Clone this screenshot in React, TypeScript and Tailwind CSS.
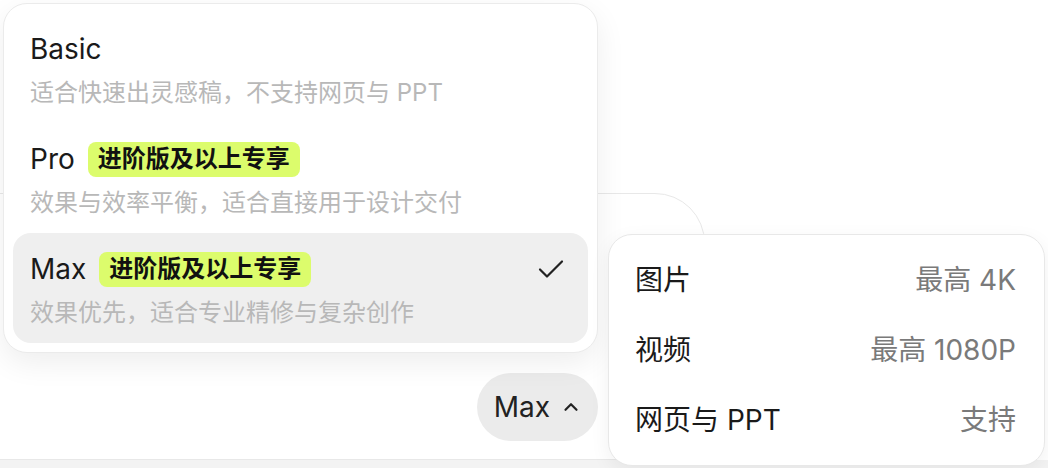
import React from "react";
import { ChevronUp } from "lucide-react";

const FONT = "font-['Inter','Noto_Sans_CJK_SC',sans-serif]";

const MODES = [
  { name: "Basic", desc: "适合快速出灵感稿，不支持网页与 PPT", badge: false, selected: false },
  { name: "Pro", desc: "效果与效率平衡，适合直接用于设计交付", badge: true, selected: false },
  { name: "Max", desc: "效果优先，适合专业精修与复杂创作", badge: true, selected: true },
];

const SPECS = [
  { label: "图片", value: "最高 4K" },
  { label: "视频", value: "最高 1080P" },
  { label: "网页与 PPT", value: "支持" },
];

const CheckMark = () => (
  <svg width="26" height="20" viewBox="0 0 26 20" fill="none">
    <path d="M2 10.5 9 17.5 24 2.5" stroke="#222" strokeWidth="2.2" strokeLinecap="round" strokeLinejoin="round" />
  </svg>
);

export default function App() {
  return (
    <div className={`relative h-[468px] w-[1048px] overflow-hidden bg-white ${FONT}`}>
      {/* background composer card */}
      <div className="flex h-full flex-col">
        <div className="h-[193px] shrink-0" />
        <div className="ml-[-40px] flex h-[267px] w-[745px] shrink-0 flex-col items-end justify-end rounded-tr-[50px] border border-[#e8e8e8] bg-white pb-[18px] pr-[106px]">
          <button className="flex h-[68px] items-center gap-[10px] rounded-full bg-[#ebebeb] pl-[17px] pr-[16px] text-[28px] text-[#222]">
            Max
            <ChevronUp className="h-[22px] w-[22px]" strokeWidth={2.4} />
          </button>
        </div>
        <div className="flex-1 bg-[#f3f3f3]" />
      </div>

      {/* mode dropdown */}
      <div className="absolute left-[3px] top-[3px] flex w-[595px] flex-col rounded-[24px] border border-[#ebebeb] bg-white p-[9px] shadow-[0_10px_30px_rgba(0,0,0,0.07)]">
        {MODES.map((m) => (
          <div
            key={m.name}
            className={`flex h-[110px] flex-col rounded-[18px] pl-[17px] pr-[24px] pt-[18px] ${m.selected ? "bg-[#efefef]" : ""}`}
          >
            <div className="flex h-[36px] items-center justify-between">
              <div className="flex items-center gap-[13px]">
                <span className="text-[28px] leading-none text-[#1a1a1a]">{m.name}</span>
                {m.badge && (
                  <span className="flex h-[35px] items-center rounded-[8px] bg-[#dcfc6c] px-[10px] text-[24px] font-semibold text-[#111]">
                    进阶版及以上专享
                  </span>
                )}
              </div>
              {m.selected && <CheckMark />}
            </div>
            <p className="mt-[9px] text-[24px] leading-[34px] text-[#b8b8b8]">{m.desc}</p>
          </div>
        ))}
      </div>

      {/* spec panel */}
      <div className="absolute left-[608px] top-[234px] flex w-[437px] flex-col rounded-[24px] border border-[#e8e8e8] bg-white py-[10px] pl-[26px] pr-[28px] shadow-[0_6px_20px_rgba(0,0,0,0.06)]">
        {SPECS.map((s) => (
          <div key={s.label} className="flex h-[70px] items-center justify-between text-[28px]">
            <span className="text-[#1a1a1a]">{s.label}</span>
            <span className="text-[#7a7a7a]">{s.value}</span>
          </div>
        ))}
      </div>
    </div>
  );
}
